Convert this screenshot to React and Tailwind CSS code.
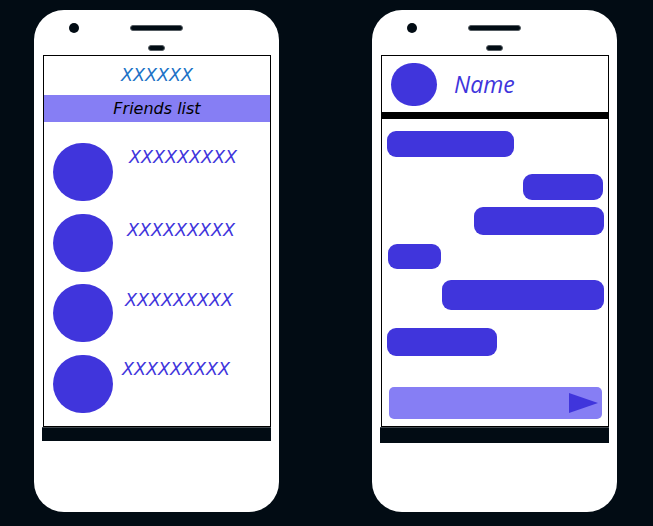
const ink = '#4035dc'

const friends = [
  { row: 'mt-[21px]', text: 'ml-[16px] mt-[6px]' },
  { row: 'mt-[13px]', text: 'ml-[14px] mt-[8px]' },
  { row: 'mt-[12px]', text: 'ml-[12px] mt-[8px]' },
  { row: 'mt-[13px]', text: 'ml-[9px] mt-[6px]' },
]

const bubbles = [
  'ml-[5px] mt-[12px] w-[127px] h-[26px] self-start',
  'mr-[5px] mt-[17px] w-[80px] h-[26px] self-end',
  'mr-[4px] mt-[7px] w-[130px] h-[28px] self-end',
  'ml-[6px] mt-[9px] w-[53px] h-[25px] self-start',
  'mr-[4px] mt-[11px] w-[162px] h-[30px] self-end',
  'ml-[5px] mt-[18px] w-[110px] h-[28px] self-start',
]

function Phone({ children, bar }) {
  return (
    <div className="w-[245px] h-[502px] bg-white rounded-[30px] flex flex-col shrink-0">
      {/* camera + speaker */}
      <div className="flex items-center mt-[13px] h-[10px]">
        <div className="ml-[35px] w-[10px] h-[10px] rounded-full bg-[#020c14]" />
        <div className="ml-[51px] w-[53px] h-[6px] rounded-full bg-[#020c14] border border-[#555c62]" />
      </div>
      <div className="mx-auto mt-[12px] w-[17px] h-[6px] rounded-full bg-[#020c14] border border-[#555c62]" />
      <div className="ml-[9px] mt-[4px] w-[228px] h-[372px] border border-black flex flex-col overflow-hidden">
        {children}
      </div>
      <div className={`ml-[8px] w-[229px] bg-[#020c14] border-t border-[#3d454c] ${bar}`} />
    </div>
  )
}

export default function App() {
  return (
    <div className="w-[653px] h-[526px] bg-[#020c14] flex pl-[34px] pt-[10px] gap-[93px] font-['DejaVu_Sans',sans-serif]">
      {/* Friends list phone */}
      <Phone bar="h-[14px]">
        <div className="h-[39px] flex items-center justify-center italic text-[17.5px] leading-none text-[#1b72c6]">
          XXXXXX
        </div>
        <div className="h-[27px] bg-[#867ef4] flex items-center justify-center italic text-[16px] leading-none text-black">
          Friends list
        </div>
        {friends.map((f, i) => (
          <div key={i} className={`flex items-start ${f.row}`}>
            <div className="ml-[9px] w-[60px] h-[58px] rounded-full bg-[#4035dc] shrink-0" />
            <span className={`italic text-[17.5px] leading-none text-[#4035dc] ${f.text}`}>XXXXXXXXX</span>
          </div>
        ))}
      </Phone>

      {/* Chat phone */}
      <Phone bar="h-[16px]">
        <div className="h-[56px] flex items-center shrink-0">
          <div className="ml-[9px] w-[46px] h-[43px] rounded-full bg-[#4035dc]" />
          <span className="ml-[17px] italic text-[23px] leading-none text-[#4035dc] font-['Open_Sans',sans-serif]">
            Name
          </span>
        </div>
        <div className="h-[7px] bg-black shrink-0" />
        <div className="flex flex-col">
          {bubbles.map((b, i) => (
            <div key={i} className={`rounded-[9px] bg-[#4035dc] ${b}`} />
          ))}
          <div className="ml-[7px] mt-[31px] w-[213px] h-[32px] rounded-[5px] bg-[#867ef4] flex items-center justify-end pr-[4px]">
            <svg width="29" height="20" viewBox="0 0 29 20">
              <polygon points="0,0 29,10 0,20" fill={ink} />
            </svg>
          </div>
        </div>
      </Phone>
    </div>
  )
}
